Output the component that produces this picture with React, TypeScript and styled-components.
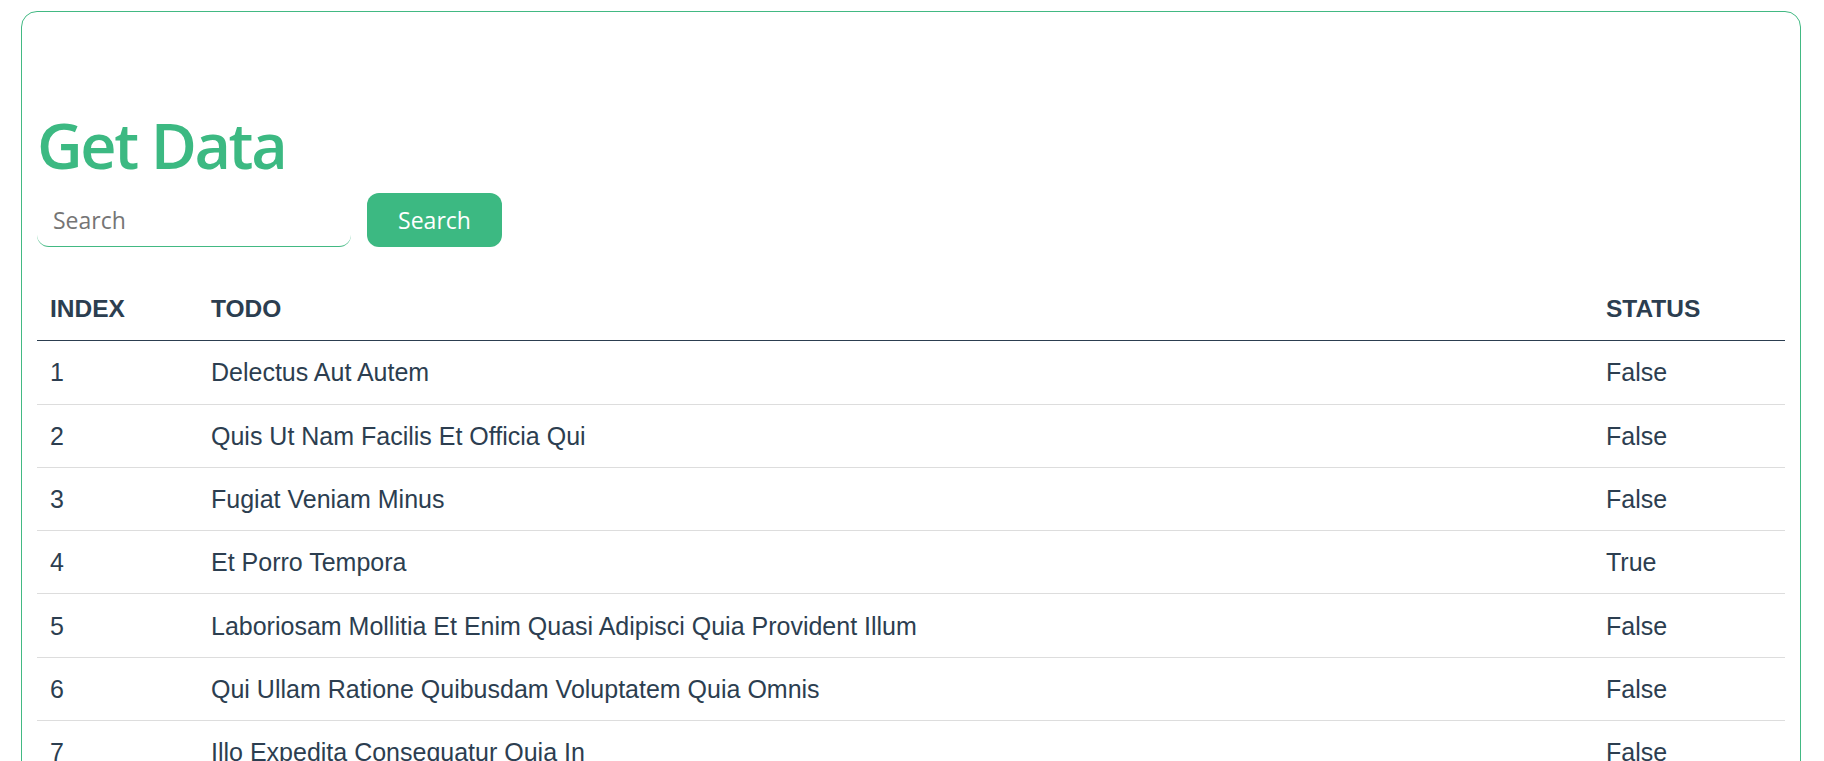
import React from "react";
import styled, { createGlobalStyle } from "styled-components";

const GlobalStyle = createGlobalStyle`
  html, body { margin: 0; padding: 0; background: #ffffff; }
  body { font-family: "Liberation Sans", Arial, sans-serif; color: #2c3e50; }
  * { box-sizing: border-box; }
`;

const Page = styled.div`
  padding: 11px 23px 0 21px;
`;

const Card = styled.section`
  border: 1px solid #42b983;
  border-radius: 16px;
  padding: 0 15px 15px;
  min-height: 900px;
`;

const Title = styled.h1`
  margin: 101px 0 0;
  font-family: "Open Sans", "Noto Sans", sans-serif;
  font-weight: 600;
  font-size: 63px;
  line-height: 64px;
  color: #3cb982;
  letter-spacing: -2.4px;
`;

const SearchRow = styled.form`
  display: flex;
  align-items: flex-end;
  gap: 16px;
  margin-top: 16px;
`;

const SearchInput = styled.input`
  width: 314px;
  height: 54px;
  border: none;
  border-bottom: 1px solid #42b983;
  border-radius: 12px;
  padding: 0 16px;
  font-family: "Open Sans", "Noto Sans", sans-serif;
  font-size: 23px;
  color: #2c3e50;
  outline: none;
  background: transparent;
  &::placeholder { color: #757575; }
`;

const SearchButton = styled.button`
  width: 135px;
  height: 54px;
  border: none;
  border-radius: 12px;
  background: #3cb982;
  color: #ffffff;
  font-family: "Open Sans", "Noto Sans", sans-serif;
  font-size: 23px;
  cursor: pointer;
`;

const Table = styled.table`
  width: 100%;
  margin-top: 31px;
  border-collapse: collapse;
  font-family: "Liberation Sans", Arial, sans-serif;
  font-size: 25px;
  color: #2c3e50;
`;

const HeadCell = styled.th<{ $w?: number }>`
  text-align: left;
  font-weight: bold;
  font-size: 24.5px;
  text-transform: uppercase;
  line-height: 28px;
  padding: 17.15px 13px;
  border-bottom: 1px solid #2c3e50;
  width: ${(p) => (p.$w ? `${p.$w}px` : "auto")};
`;

const Cell = styled.td`
  text-align: left;
  line-height: 28px;
  padding: 17.15px 13px;
  border-bottom: 1px solid #dddddd;
`;

const todos = [
  { id: 1, title: "Delectus Aut Autem", done: false },
  { id: 2, title: "Quis Ut Nam Facilis Et Officia Qui", done: false },
  { id: 3, title: "Fugiat Veniam Minus", done: false },
  { id: 4, title: "Et Porro Tempora", done: true },
  { id: 5, title: "Laboriosam Mollitia Et Enim Quasi Adipisci Quia Provident Illum", done: false },
  { id: 6, title: "Qui Ullam Ratione Quibusdam Voluptatem Quia Omnis", done: false },
  { id: 7, title: "Illo Expedita Consequatur Quia In", done: false },
  { id: 8, title: "Quo Adipisci Enim Quam Ut Ab", done: true },
  { id: 9, title: "Molestiae Perspiciatis Ipsa", done: false },
];

export default function App() {
  return (
    <Page>
      <GlobalStyle />
      <Card>
        <Title>Get Data</Title>
        <SearchRow onSubmit={(e) => e.preventDefault()}>
          <SearchInput placeholder="Search" />
          <SearchButton type="submit">Search</SearchButton>
        </SearchRow>
        <Table>
          <thead>
            <tr>
              <HeadCell $w={161}>Index</HeadCell>
              <HeadCell>Todo</HeadCell>
              <HeadCell $w={192}>Status</HeadCell>
            </tr>
          </thead>
          <tbody>
            {todos.map((t) => (
              <tr key={t.id}>
                <Cell>{t.id}</Cell>
                <Cell>{t.title}</Cell>
                <Cell>{t.done ? "True" : "False"}</Cell>
              </tr>
            ))}
          </tbody>
        </Table>
      </Card>
    </Page>
  );
}
